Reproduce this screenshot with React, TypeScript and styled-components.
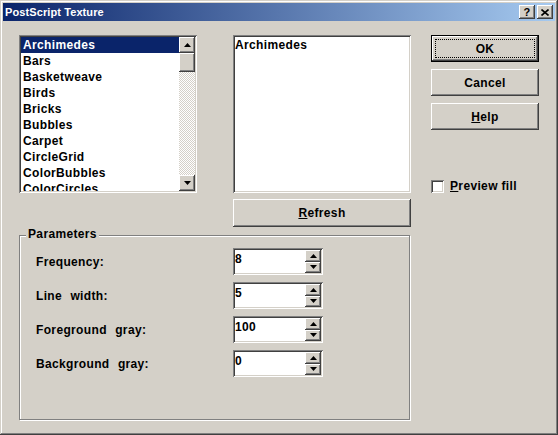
import styled, { createGlobalStyle } from "styled-components";

const GlobalStyle = createGlobalStyle`
  body {
    margin: 0;
    background: #d4d0c8;
    font-family: "Liberation Sans", Arial, sans-serif;
  }
`;

const raised = `
  box-shadow: inset -1px -1px #404040, inset 1px 1px #fff,
    inset -2px -2px #808080, inset 2px 2px #d4d0c8;
`;

const sunken = `
  box-shadow: inset 1px 1px #808080, inset -1px -1px #fff,
    inset 2px 2px #404040, inset -2px -2px #d4d0c8;
`;

const Window = styled.div`
  width: 558px;
  height: 435px;
  box-sizing: border-box;
  padding: 3px;
  background: #d4d0c8;
  box-shadow: inset -1px -1px #404040, inset 1px 1px #d4d0c8,
    inset -2px -2px #808080, inset 2px 2px #fff;
  display: flex;
  flex-direction: column;
  font-weight: bold;
  font-size: 12px;
  letter-spacing: 0.35px;
  color: #000;
`;

const TitleBar = styled.div`
  height: 18px;
  display: flex;
  align-items: center;
  padding: 0 2px 0 2px;
  background: linear-gradient(to right, #0a246a, #a6caf0);
`;

const Title = styled.span`
  flex: 1;
  color: #fff;
  font-size: 11px;
  font-weight: bold;
  letter-spacing: 0.1px;
`;

const CaptionButton = styled.div`
  width: 16px;
  height: 14px;
  margin-left: 2px;
  background: #d4d0c8;
  ${raised}
  display: flex;
  align-items: center;
  justify-content: center;
  font-size: 11px;
  font-weight: bold;
  line-height: 1;
`;

const Body = styled.div`
  flex: 1;
  display: flex;
  gap: 20px;
  padding: 14px 0 0 16px;
`;

const LeftArea = styled.div`
  width: 392px;
  display: flex;
  flex-direction: column;
`;

const TopRow = styled.div`
  display: flex;
  gap: 36px;
`;

const ListBox = styled.div`
  width: 178px;
  height: 158px;
  box-sizing: border-box;
  padding: 2px;
  background: #fff;
  ${sunken}
  display: flex;
`;

const Items = styled.div`
  flex: 1;
  overflow: hidden;
`;

const Item = styled.div<{ $selected?: boolean }>`
  height: 16px;
  line-height: 16px;
  padding-left: 2px;
  white-space: nowrap;
  background: ${(p) => (p.$selected ? "#0a246a" : "transparent")};
  color: ${(p) => (p.$selected ? "#fff" : "#000")};
`;

const ScrollBar = styled.div`
  width: 16px;
  display: flex;
  flex-direction: column;
`;

const ScrollButton = styled.div`
  width: 16px;
  height: 16px;
  flex: none;
  background: #d4d0c8;
  ${raised}
  display: flex;
  align-items: center;
  justify-content: center;
`;

const Thumb = styled.div`
  width: 16px;
  height: 19px;
  flex: none;
  background: #d4d0c8;
  ${raised}
`;

const Track = styled.div`
  flex: 1;
  background: repeating-conic-gradient(#d4d0c8 0 25%, #fff 0 50%) 0 0 / 2px 2px;
`;

const PreviewCol = styled.div`
  width: 178px;
  display: flex;
  flex-direction: column;
  gap: 6px;
`;

const PreviewBox = styled.div`
  height: 158px;
  box-sizing: border-box;
  padding: 2px 2px;
  background: #fff;
  ${sunken}
  line-height: 16px;
`;

const Button = styled.button<{ $default?: boolean; $h?: number }>`
  position: relative;
  width: 100%;
  height: ${(p) => p.$h ?? 27}px;
  border: none;
  padding: 0;
  background: #d4d0c8;
  font: bold 12px "Liberation Sans", Arial, sans-serif;
  letter-spacing: 0.35px;
  color: #000;
  box-shadow: ${(p) =>
    p.$default
      ? "inset 0 0 0 1px #000, inset -2px -2px #404040, inset 2px 2px #fff, inset -3px -3px #808080, inset 3px 3px #d4d0c8"
      : "inset -1px -1px #404040, inset 1px 1px #fff, inset -2px -2px #808080, inset 2px 2px #d4d0c8"};

  &::after {
    content: "";
    display: ${(p) => (p.$default ? "block" : "none")};
    position: absolute;
    inset: 4px;
    border: 1px dotted #000;
  }
`;

const U = styled.span`
  text-decoration: underline;
`;

const GroupBox = styled.div`
  position: relative;
  margin-top: 8px;
  width: 391px;
  height: 185px;
  box-sizing: border-box;
  border: 1px solid #808080;
  box-shadow: 1px 1px 0 #fff, inset 1px 1px 0 #fff;
  padding: 12px 0 0 16px;
`;

const Legend = styled.span`
  position: absolute;
  top: -9px;
  left: 6px;
  padding: 0 2px;
  background: #d4d0c8;
  line-height: 14px;
`;

const ParamRow = styled.div`
  display: grid;
  grid-template-columns: 197px 90px;
  align-items: center;
  height: 27px;
  margin-bottom: 7px;
`;

const Label = styled.span`
  white-space: pre;
  word-spacing: 0.5px;
`;

const SpinField = styled.div`
  height: 27px;
  box-sizing: border-box;
  padding: 2px;
  background: #fff;
  ${sunken}
  display: flex;
`;

const SpinValue = styled.span`
  flex: 1;
  padding-top: 2px;
  line-height: 14px;
`;

const Spinner = styled.div`
  width: 16px;
  display: flex;
  flex-direction: column;
`;

const SpinButton = styled.div`
  flex: 1;
  background: #d4d0c8;
  ${raised}
  display: flex;
  align-items: center;
  justify-content: center;
`;

const RightColumn = styled.div`
  width: 108px;
  display: flex;
  flex-direction: column;
  gap: 7px;
`;

const CheckRow = styled.label`
  margin-top: 42px;
  display: flex;
  align-items: center;
  gap: 6px;
`;

const CheckBox = styled.span`
  width: 13px;
  height: 13px;
  background: #fff;
  ${sunken}
`;

const Arrow = ({ up }: { up?: boolean }) => (
  <svg width="7" height="4" viewBox="0 0 7 4">
    <polygon points={up ? "3.5,0 7,4 0,4" : "0,0 7,0 3.5,4"} fill="#000" />
  </svg>
);

const items = [
  "Archimedes",
  "Bars",
  "Basketweave",
  "Birds",
  "Bricks",
  "Bubbles",
  "Carpet",
  "CircleGrid",
  "ColorBubbles",
  "ColorCircles",
];

const params = [
  ["Frequency:", "8"],
  ["Line  width:", "5"],
  ["Foreground  gray:", "100"],
  ["Background  gray:", "0"],
];

export default function App() {
  return (
    <>
      <GlobalStyle />
      <Window>
        <TitleBar>
          <Title>PostScript Texture</Title>
          <CaptionButton>?</CaptionButton>
          <CaptionButton>
            <svg width="8" height="7" viewBox="0 0 8 7">
              <path d="M0.5 0.5 L7.5 6.5 M7.5 0.5 L0.5 6.5" stroke="#000" strokeWidth="1.6" />
            </svg>
          </CaptionButton>
        </TitleBar>
        <Body>
          <LeftArea>
            <TopRow>
              <ListBox>
                <Items>
                  {items.map((it, i) => (
                    <Item key={it} $selected={i === 0}>
                      {it}
                    </Item>
                  ))}
                </Items>
                <ScrollBar>
                  <ScrollButton>
                    <Arrow up />
                  </ScrollButton>
                  <Thumb />
                  <Track />
                  <ScrollButton>
                    <Arrow />
                  </ScrollButton>
                </ScrollBar>
              </ListBox>
              <PreviewCol>
                <PreviewBox>Archimedes</PreviewBox>
                <Button $h={28}>
                  <U>R</U>efresh
                </Button>
              </PreviewCol>
            </TopRow>
            <GroupBox>
              <Legend>Parameters</Legend>
              {params.map(([label, value]) => (
                <ParamRow key={label}>
                  <Label>{label}</Label>
                  <SpinField>
                    <SpinValue>{value}</SpinValue>
                    <Spinner>
                      <SpinButton>
                        <Arrow up />
                      </SpinButton>
                      <SpinButton>
                        <Arrow />
                      </SpinButton>
                    </Spinner>
                  </SpinField>
                </ParamRow>
              ))}
            </GroupBox>
          </LeftArea>
          <RightColumn>
            <Button $default>OK</Button>
            <Button>Cancel</Button>
            <Button>
              <U>H</U>elp
            </Button>
            <CheckRow>
              <CheckBox />
              <span>
                <U>P</U>review fill
              </span>
            </CheckRow>
          </RightColumn>
        </Body>
      </Window>
    </>
  );
}
